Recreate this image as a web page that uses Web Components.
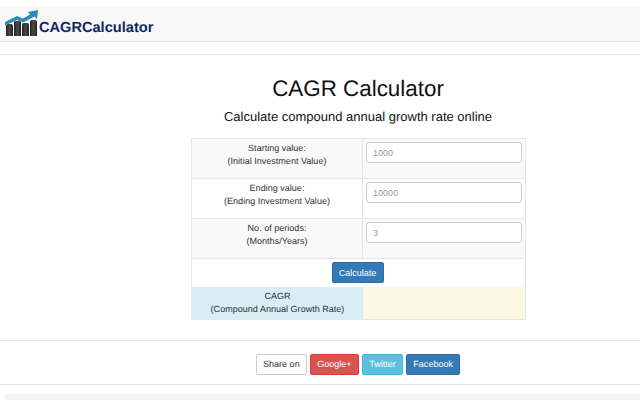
<!DOCTYPE html>
<html>
<head>
<meta charset="utf-8">
<title>CAGR Calculator</title>
<style>
    html, body { margin: 0; padding: 0; background: #fff; }
    body { width: 640px; height: 400px; overflow: hidden; font-family: "Liberation Sans", Arial, sans-serif; color: #333; text-rendering: geometricPrecision; }
</style>
</head>
<body>
<cagr-navbar></cagr-navbar>
<cagr-heading></cagr-heading>
<cagr-form>
    <cagr-row label="Starting value:" hint="(Initial Investment Value)" value="1000" tone="grey"></cagr-row>
    <cagr-row label="Ending value:" hint="(Ending Investment Value)" value="10000"></cagr-row>
    <cagr-row label="No. of periods:" hint="(Months/Years)" value="3" tone="grey"></cagr-row>
</cagr-form>
<cagr-share></cagr-share>
<cagr-footer></cagr-footer>

<script>
// Barre du haut avec le logo
class CagrNavbar extends HTMLElement {
    constructor() {
        super();
        this.attachShadow({ mode: 'open' });
        this.shadowRoot.innerHTML = `
            <style>
                :host { display: block; padding-top: 6px; }
                .bar {
                    height: 35px;
                    background: #f8f8f8;
                    border-bottom: 1px solid #e3e3e3;
                    display: flex;
                    align-items: center;
                    padding-left: 5px;
                }
                svg { display: block; flex-shrink: 0; margin-top: -1px; }
                .name {
                    font: bold 14.6px "Liberation Sans", Arial, sans-serif;
                    color: #10295f;
                    margin-top: 8px;
                }
                .rule { height: 12px; border-bottom: 1px solid #e6e6e6; }
            </style>
            <div class="bar">
                <svg width="34" height="28" viewBox="0 0 34 28">
                    <defs>
                        <linearGradient id="barFill">
                            <stop offset="0" stop-color="#222"/>
                            <stop offset="0.5" stop-color="#4a4a4a"/>
                            <stop offset="1" stop-color="#222"/>
                        </linearGradient>
                    </defs>
                    <path d="M1 17 q0-2 2-2 h3 q2 0 2 2 v10 h-7z" fill="url(#barFill)"/>
                    <path d="M9 14 q0-2 2-2 h3 q2 0 2 2 v13 h-7z" fill="url(#barFill)"/>
                    <path d="M17 16 q0-2 2-2 h3 q2 0 2 2 v11 h-7z" fill="url(#barFill)"/>
                    <path d="M25 13 q0-2 2-2 h3 q2 0 2 2 v14 h-7z" fill="url(#barFill)"/>
                    <path d="M0 13 L12 7 L18 9.5 L25 5.5 L23 3 L33 1 L32 10 L29.5 7.5 L18 13.5 L12 11 L0 16.5z" fill="#2a8db5"/>
                </svg>
                <span class="name">CAGRCalculator</span>
            </div>
            <div class="rule"></div>
        `;
    }
}

class CagrHeading extends HTMLElement {
    constructor() {
        super();
        this.attachShadow({ mode: 'open' });
        this.shadowRoot.innerHTML = `
            <style>
                :host { display: block; text-align: center; color: #111; padding: 20px 0 0 76px; }
                h1 { margin: 0; font: 400 22.4px/28px "Liberation Sans", Arial, sans-serif; }
                h2 { margin: 6px 0 0; font: 400 13px/16px "Liberation Sans", Arial, sans-serif; }
            </style>
            <h1>CAGR Calculator</h1>
            <h2>Calculate compound annual growth rate online</h2>
        `;
    }
}

// Une ligne du tableau : libellé à gauche, champ à droite
class CagrRow extends HTMLElement {
    constructor() {
        super();
        this.attachShadow({ mode: 'open' });
    }

    connectedCallback() {
        const tone = this.getAttribute('tone') === 'grey' ? '#f9f9f9' : '#fff';
        this.shadowRoot.innerHTML = `
            <style>
                :host {
                    display: grid;
                    grid-template-columns: 171px 1fr;
                    height: 40px;
                    box-sizing: border-box;
                    border-bottom: 1px solid #e6e6e6;
                    background: ${tone};
                }
                .label {
                    border-right: 1px solid #e6e6e6;
                    text-align: center;
                    font-size: 9.05px;
                    line-height: 12.5px;
                    padding-top: 3px;
                    color: #333;
                }
                .field { padding: 3px 3px 0; }
                input {
                    display: block;
                    box-sizing: border-box;
                    width: 100%;
                    height: 21px;
                    border: 1px solid #ccc;
                    border-radius: 3px;
                    background: #fff;
                    padding: 0 6px;
                    font: 9.05px "Liberation Sans", Arial, sans-serif;
                    outline: none;
                }
                input::placeholder { color: #999; opacity: 1; }
            </style>
            <div class="label">${this.getAttribute('label')}<br>${this.getAttribute('hint')}</div>
            <div class="field"><input type="text" placeholder="${this.getAttribute('value')}"></div>
        `;
    }
}

// Tableau complet, les lignes arrivent par le slot
class CagrForm extends HTMLElement {
    constructor() {
        super();
        this.attachShadow({ mode: 'open' });
        this.shadowRoot.innerHTML = `
            <style>
                :host {
                    display: block;
                    width: 335px;
                    box-sizing: border-box;
                    margin: 13px 0 0 191px;
                    border: 1px solid #e6e6e6;
                }
                .action {
                    height: 28px;
                    display: flex;
                    justify-content: center;
                    align-items: flex-start;
                    padding: 3px 2px 0 0;
                    box-sizing: border-box;
                }
                button {
                    height: 21px;
                    width: 52px;
                    padding: 0;
                    background: #337ab7;
                    border: 1px solid #2e6da4;
                    border-radius: 2px;
                    color: #fff;
                    font: 9.05px "Liberation Sans", Arial, sans-serif;
                }
                .result { display: grid; grid-template-columns: 171px 1fr; height: 32px; }
                .name {
                    background: #d9edf7;
                    text-align: center;
                    font-size: 9.05px;
                    line-height: 12.5px;
                    padding-top: 3px;
                    color: #333;
                }
                .out { background: #fcf8e3; }
            </style>
            <slot></slot>
            <div class="action"><button>Calculate</button></div>
            <div class="result">
                <div class="name">CAGR<br>(Compound Annual Growth Rate)</div>
                <div class="out"></div>
            </div>
        `;
    }
}

class CagrShare extends HTMLElement {
    constructor() {
        super();
        this.attachShadow({ mode: 'open' });
        this.shadowRoot.innerHTML = `
            <style>
                :host {
                    display: flex;
                    justify-content: center;
                    gap: 3px;
                    margin-top: 20px;
                    height: 45px;
                    box-sizing: border-box;
                    padding: 13px 0 0 76px;
                    border-top: 1px solid #e6e6e6;
                    border-bottom: 1px solid #e6e6e6;
                }
                span {
                    box-sizing: border-box;
                    height: 21px;
                    line-height: 19px;
                    border: 1px solid;
                    border-radius: 2px;
                    padding: 0 6.25px;
                    font-size: 9.05px;
                    color: #fff;
                }
                .plain { background: #fff; border-color: #ccc; color: #333; }
                .red { background: #d9534f; border-color: #d43f3a; }
                .cyan { background: #5bc0de; border-color: #46b8da; }
                .blue { background: #337ab7; border-color: #2e6da4; }
            </style>
            <span class="plain">Share on</span>
            <span class="red">Google+</span>
            <span class="cyan">Twitter</span>
            <span class="blue">Facebook</span>
        `;
    }
}

// Début du pied de page, coupé par le bas de la fenêtre
class CagrFooter extends HTMLElement {
    constructor() {
        super();
        this.attachShadow({ mode: 'open' });
        this.shadowRoot.innerHTML = `
            <style>
                :host { display: block; padding: 9px 0 0 5px; }
                div { height: 10px; background: #f5f5f5; border-radius: 2px; }
            </style>
            <div></div>
        `;
    }
}

customElements.define('cagr-navbar', CagrNavbar);
customElements.define('cagr-heading', CagrHeading);
customElements.define('cagr-row', CagrRow);
customElements.define('cagr-form', CagrForm);
customElements.define('cagr-share', CagrShare);
customElements.define('cagr-footer', CagrFooter);
</script>
</body>
</html>
